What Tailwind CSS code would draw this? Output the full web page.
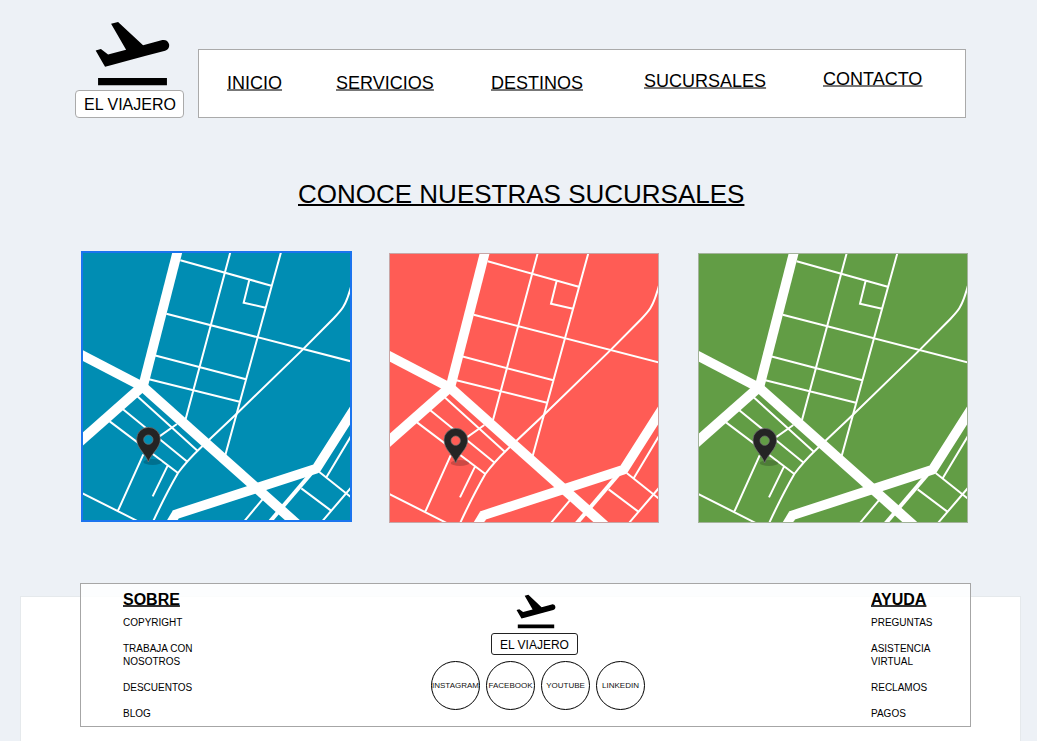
<!DOCTYPE html>
<html lang="es">
<head>
<meta charset="utf-8">
<title>El Viajero</title>
<script src="https://cdn.jsdelivr.net/npm/@tailwindcss/browser@4"></script>
</head>
<body class="relative h-[741px] w-[1037px] overflow-hidden bg-[#edf1f6] text-black font-['Liberation_Sans',Arial,sans-serif]">
<svg class="hidden">
  <defs>
    <path id="plane" d="M2.5 19h19v2h-19v-2zm19.57-9.36c-.21-.8-1.04-1.28-1.84-1.06L14.92 10l-6.9-6.43-1.93.51 4.14 7.17-4.97 1.33-1.97-1.54-1.45.39 1.82 3.16.77 1.33 1.6-.43 5.31-1.42 4.35-1.16L21 11.49c.81-.23 1.28-1.05 1.07-1.85z"/>
    <g id="streets">
      <g fill="none" stroke="#fff" stroke-width="6">
        <path d="M311 46L584 122M462 18L327 522M614 18L446 630M518 104L501 173L567 188M269 206L830 351M233 331L508 403M214 402L489 470"/>
        <path d="M828 108Q813 165 799 187Q792 198 772 219L678 314L480 506L372 608Q330 648 304 684Q268 746 228 832"/>
        <path d="M182 454L364 619M138 492L332 650M99 529L304 684M301 537L240 580M200 628L124 797M273 662L228 754M10 741L190 832"/>
        <path d="M728 681L830 762M674 730L763 797M828 722L734 832M828 565L750 695M560 760L500 832"/>
      </g>
      <g fill="none" stroke="#fff">
        <path stroke-width="12" d="M706 682L578 832"/>
        <path stroke-width="29" d="M304 14L199 424"/>
        <path stroke-width="29" d="M8 326L194 423"/>
        <path stroke-width="30" d="M195 426L-10 607"/>
        <path stroke-width="30" d="M190 418L666 842"/>
        <path stroke-width="29" stroke-linejoin="round" d="M292 810L719 671L870 433"/>
      </g>
      <path fill="#fff" d="M288 797L306 821L296 834L266 834z"/>
      <ellipse cx="228" cy="651" rx="28" ry="9" fill="#000" opacity=".2"/>
      <path fill="#242424" stroke="#777" stroke-width="2" fill-rule="evenodd" d="M215 651C207 626 180 610 180 582A35.500 35 0 0 1 251 582C251 610 223 626 215 651zM215 570a14 14 0 1 0 .1 0z"/>
    </g>
  </defs>
</svg>

<div class="absolute top-[596px] left-[20px] h-[145px] w-[1001px] border border-b-0 border-[#e5e9ec] bg-white"></div>

<div class="relative flex h-full flex-col">
  <header class="flex h-[118px] items-end pl-[75px]">
    <div class="flex w-[109px] flex-col items-center">
      <svg class="mb-[-6px] ml-[5px] size-[87px]" viewBox="0 0 24 24"><use href="#plane"/></svg>
      <div class="flex h-7 w-[109px] items-center justify-center rounded-[4px] border border-[#aaa] bg-white pt-px pl-px text-base leading-none whitespace-nowrap">EL VIAJERO</div>
    </div>
    <nav class="ml-[14px] flex h-[69px] w-[768px] items-start border border-[#aaa] bg-white pl-7 text-lg leading-5 underline decoration-[#777] decoration-2 underline-offset-0 [text-decoration-skip-ink:none]">
      <a class="mt-[23px] w-[109px]">INICIO</a>
      <a class="mt-[23px] w-[155px]">SERVICIOS</a>
      <a class="mt-[23px] w-[153px]">DESTINOS</a>
      <a class="mt-[21px] w-[179px]">SUCURSALES</a>
      <a class="mt-[19px]">CONTACTO</a>
    </nav>
  </header>

  <h1 class="mt-[61px] pl-[298px] text-[26px] leading-[30px] whitespace-nowrap underline decoration-2 underline-offset-1 [text-decoration-skip-ink:none]">CONOCE NUESTRAS SUCURSALES</h1>

  <main class="mt-[42px] flex h-[272px] pl-[81px]">
    <div class="relative size-[271px] bg-[#008db3]">
      <svg class="size-full" viewBox="13 18 813 813"><use href="#streets"/></svg>
      <div class="absolute inset-0 border-2 border-[#1b74ee]"></div>
    </div>
    <div class="relative mt-[2px] ml-[37px] size-[270px] bg-[#ff5c55]">
      <svg class="size-full" viewBox="15 21 810 810"><use href="#streets"/></svg>
      <div class="absolute inset-0 border border-[#c8a6a6]"></div>
    </div>
    <div class="relative mt-[2px] ml-[39px] size-[270px] bg-[#629d45]">
      <svg class="size-full" viewBox="15 21 810 810"><use href="#streets"/></svg>
      <div class="absolute inset-0 border border-[#a3b39b]"></div>
    </div>
  </main>

  <footer class="mt-[60px] ml-[80px] flex h-[144px] w-[891px] border border-[#a6a6a6] bg-white/85 pl-[42px] text-[10px] leading-[13px]">
    <section class="w-[308px] pt-[7px]">
      <h2 class="text-base leading-[18px] font-bold underline decoration-[#333] decoration-2 underline-offset-0 [text-decoration-skip-ink:none]">SOBRE</h2>
      <ul class="mt-[7px] space-y-[13px]">
        <li>COPYRIGHT</li>
        <li>TRABAJA CON<br>NOSOTROS</li>
        <li>DESCUENTOS</li>
        <li>BLOG</li>
      </ul>
    </section>
    <section class="flex w-[214px] flex-col items-center pt-1">
      <svg class="mr-[5px] size-[46px] shrink-0" viewBox="0 0 24 24"><use href="#plane"/></svg>
      <div class="mt-[-1px] mr-[7px] flex h-[22px] w-[87px] shrink-0 items-center justify-center rounded-[3px] border border-[#222] bg-white pt-px text-xs leading-none whitespace-nowrap">EL VIAJERO</div>
      <div class="mt-[6px] flex gap-[6px] text-[8px] text-[#111]">
        <a class="flex size-[49px] items-center justify-center rounded-full border border-black bg-white">INSTAGRAM</a>
        <a class="flex size-[49px] items-center justify-center rounded-full border border-black bg-white">FACEBOOK</a>
        <a class="flex size-[49px] items-center justify-center rounded-full border border-black bg-white">YOUTUBE</a>
        <a class="flex size-[49px] items-center justify-center rounded-full border border-black bg-white">LINKEDIN</a>
      </div>
    </section>
    <section class="ml-[226px] w-[99px] pt-[7px]">
      <h2 class="text-base leading-[18px] font-bold underline decoration-[#333] decoration-2 underline-offset-0 [text-decoration-skip-ink:none]">AYUDA</h2>
      <ul class="mt-[7px] space-y-[13px]">
        <li>PREGUNTAS</li>
        <li>ASISTENCIA<br>VIRTUAL</li>
        <li>RECLAMOS</li>
        <li>PAGOS</li>
      </ul>
    </section>
  </footer>
</div>
</body>
</html>
